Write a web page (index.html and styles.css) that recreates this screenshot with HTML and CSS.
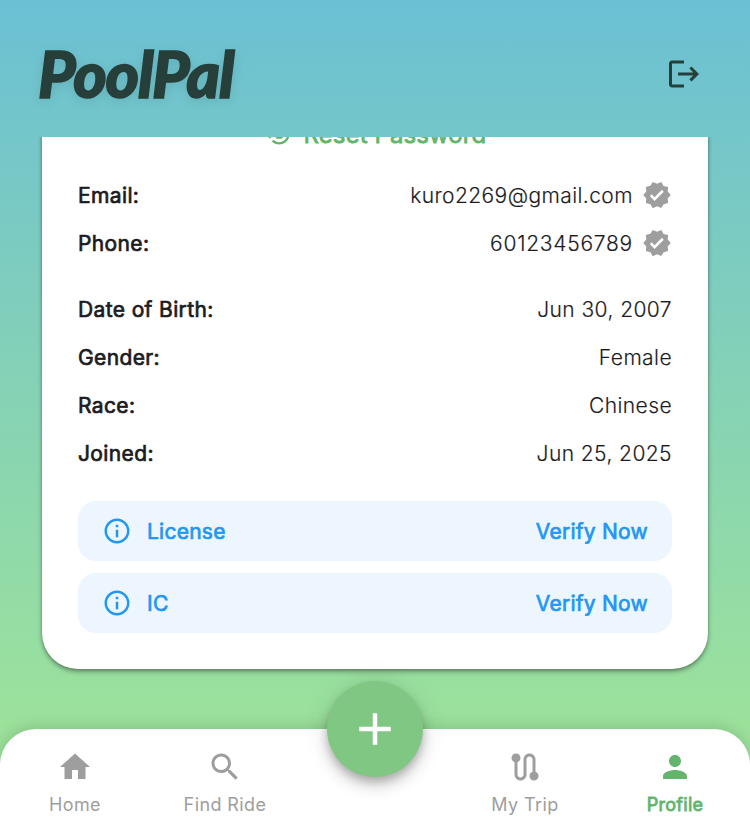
FILE: index.html
```html
<!DOCTYPE html>
<html lang="en">
<head>
<meta charset="utf-8">
<title>PoolPal</title>
<link rel="stylesheet" href="styles.css">
</head>
<body>
<svg class="defs" width="0" height="0">
  <symbol id="verified" viewBox="0 0 24 24"><path d="M23 12l-2.44-2.79.34-3.69-3.61-.82-1.89-3.2L12 2.96 8.6 1.5 6.71 4.69 3.1 5.5l.34 3.7L1 12l2.44 2.79-.34 3.7 3.61.82L8.6 22.5l3.4-1.47 3.4 1.46 1.89-3.19 3.61-.82-.34-3.69L23 12zm-12.91 4.72l-3.8-3.81 1.48-1.48 2.32 2.33 5.85-5.87 1.48 1.48-7.33 7.35z"/></symbol>
  <symbol id="info" viewBox="0 0 24 24"><path d="M11 7h2v2h-2zm0 4h2v6h-2zm1-9C6.48 2 2 6.48 2 12s4.48 10 10 10 10-4.48 10-10S17.520 2 12 2zm0 18c-4.410 0-8-3.590-8-8s3.590-8 8-8 8 3.590 8 8-3.590 8-8 8z"/></symbol>
</svg>
<div class="app">
  <header class="header">
    <div class="logo">PoolPal</div>
    <svg class="icon-36" viewBox="0 0 24 24"><path d="M17 7l-1.410 1.410L18.170 11H8v2h10.170l-2.580 2.580L17 17l5-5zM4 5h8V3H4c-1.100 0-2 .9-2 2v14c0 1.100.9 2 2 2h8v-2H4V5z"/></svg>
  </header>
  <main class="scroll">
    <section class="card">
      <div class="reset">
        <svg class="icon-28" viewBox="0 0 24 24"><path d="M13 3c-4.970 0-9 4.030-9 9H1l4 4 4-4H6c0-3.860 3.140-7 7-7s7 3.140 7 7-3.140 7-7 7c-1.900 0-3.620-.76-4.880-1.990L6.700 18.420C8.320 20.010 10.550 21 13 21c4.970 0 9-4.030 9-9s-4.030-9-9-9zm2 8v-1c0-1.100-.9-2-2-2s-2 .9-2 2v1c-.55 0-1 .45-1 1v3c0 .55.45 1 1 1h4c.55 0 1-.45 1-1v-3c0-.55-.45-1-1-1zm-1 0h-2v-1c0-.55.45-1 1-1s1 .45 1 1v1z"/></svg>
        <span>Reset Password</span>
      </div>
      <div class="rows contact">
        <div class="row"><b>Email:</b><span>kuro2269@gmail.com</span><svg class="icon-30"><use href="#verified"/></svg></div>
        <div class="row"><b>Phone:</b><span class="number">60123456789</span><svg class="icon-30"><use href="#verified"/></svg></div>
      </div>
      <div class="rows">
        <div class="row"><b>Date of Birth:</b><span>Jun 30, 2007</span></div>
        <div class="row"><b>Gender:</b><span>Female</span></div>
        <div class="row"><b>Race:</b><span>Chinese</span></div>
        <div class="row"><b>Joined:</b><span>Jun 25, 2025</span></div>
      </div>
      <div class="tiles">
        <div class="tile"><svg class="icon-30"><use href="#info"/></svg><b>License</b><b class="action">Verify Now</b></div>
        <div class="tile"><svg class="icon-30"><use href="#info"/></svg><b>IC</b><b class="action">Verify Now</b></div>
      </div>
    </section>
  </main>
  <nav class="nav">
    <a class="item"><svg class="icon-36" viewBox="0 0 24 24"><path d="M10 20v-6h4v6h5v-8h3L12 3 2 12h3v8z"/></svg><span>Home</span></a>
    <a class="item"><svg class="icon-36" viewBox="0 0 24 24"><path d="M15.500 14h-.79l-.28-.27C15.410 12.590 16 11.110 16 9.500 16 5.910 13.090 3 9.500 3S3 5.910 3 9.500 5.910 16 9.500 16c1.610 0 3.090-.59 4.230-1.570l.27.28v.79l5 4.990L20.490 19l-4.990-5zm-6 0C7.010 14 5 11.990 5 9.500S7.010 5 9.500 5 14 7.010 14 9.500 11.990 14 9.500 14z"/></svg><span>Find Ride</span></a>
    <a class="item"><svg class="icon-36" viewBox="0 0 24 24"><path d="M19 15.180V7c0-2.210-1.790-4-4-4s-4 1.790-4 4v10c0 1.100-.9 2-2 2s-2-.9-2-2V8.820C8.160 8.400 9 7.300 9 6c0-1.660-1.340-3-3-3S3 4.340 3 6c0 1.300.84 2.400 2 2.820V17c0 2.210 1.790 4 4 4s4-1.790 4-4V7c0-1.100.9-2 2-2s2 .9 2 2v8.180c-1.160.42-2 1.520-2 2.820 0 1.660 1.340 3 3 3s3-1.340 3-3c0-1.300-.84-2.400-2-2.820z"/></svg><span>My Trip</span></a>
    <a class="item active"><svg class="icon-36" viewBox="0 0 24 24"><path d="M12 12c2.210 0 4-1.790 4-4s-1.790-4-4-4-4 1.790-4 4 1.790 4 4 4zm0 2c-2.670 0-8 1.340-8 4v2h16v-2c0-2.660-5.330-4-8-4z"/></svg><span>Profile</span></a>
    <button class="fab" aria-label="Add"><svg viewBox="0 0 24 24"><path d="M19 13h-6v6h-2v-6H5v-2h6V5h2v6h6z"/></svg></button>
  </nav>
</div>
</body>
</html>
```
FILE: styles.css
```css
* { box-sizing: border-box; }
body { margin: 0; font-family: Inter, "Liberation Sans", sans-serif; color: #1c1b1f; }
svg { display: block; flex: none; fill: currentColor; }
.defs { position: absolute; }
.icon-28 { width: 28px; height: 28px; }
.icon-30 { width: 30px; height: 30px; }
.icon-36 { width: 36px; height: 36px; }

.app {
  height: 837px;
  display: flex;
  flex-direction: column;
  overflow: hidden;
  background: linear-gradient(#6bc0d4, #9ce29b 730px);
}

.header {
  height: 137px;
  flex: none;
  display: flex;
  align-items: center;
  justify-content: space-between;
  padding: 11px 48px 0 38px;
  color: #263f3a;
}
.logo {
  font: italic 900 64px/70px Lato, sans-serif;
  letter-spacing: -1.2px;
  -webkit-text-stroke: 1.6px #263f3a;
  text-shadow: 0 3px 12px rgba(0, 0, 0, .12);
}

.scroll {
  height: 592px;
  flex: none;
  display: flex;
  flex-direction: column;
  justify-content: flex-end;
  overflow: hidden;
  padding: 0 42px 60px;
}
.card {
  flex: none;
  padding: 36px;
  border-radius: 36px;
  background: #fff;
  box-shadow: 0 3px 5px rgba(0, 0, 0, .3), 0 1px 3px rgba(0, 0, 0, .2);
}
.reset {
  display: flex;
  align-items: center;
  justify-content: center;
  gap: 12px;
  height: 46px;
  margin-bottom: 14px;
  color: #64b46c;
  font-size: 24px;
  letter-spacing: .1px;
  -webkit-text-stroke: .8px;
}
.reset svg { stroke: none; }
.contact { margin-bottom: 18px; }
.row {
  display: flex;
  align-items: center;
  height: 48px;
  font-size: 21px;
  letter-spacing: .375px;
}
b { font-weight: 400; -webkit-text-stroke: .7px; }
.row span { margin-left: auto; font-weight: 300; letter-spacing: .42px; -webkit-text-stroke: .15px; }
.row .number { letter-spacing: .75px; }
.row svg { margin-left: 9px; color: #9e9e9e; }

.tiles { display: grid; gap: 12px; margin-top: 24px; }
.tile {
  display: flex;
  align-items: center;
  height: 60px;
  padding: 0 24px;
  border-radius: 18px;
  background: #edf6fe;
  color: #2196f3;
  font-size: 21px;
  letter-spacing: .25px;
}
.tile svg { margin-right: 15px; }
.action { margin-left: auto; }

.nav {
  position: relative;
  height: 108px;
  flex: none;
  display: grid;
  grid-template-columns: 150px 150px 1fr 150px 150px;
  border-radius: 36px 36px 0 0;
  background: #fff;
  box-shadow: 0 -3px 15px rgba(0, 0, 0, .14);
}
.item {
  display: flex;
  flex-direction: column;
  align-items: center;
  padding-top: 20px;
  color: #9e9e9e;
  font-size: 18px;
  line-height: 24px;
  letter-spacing: .4px;
}
.item span { margin-top: 8px; }
.item:nth-child(3) { grid-column: 4; }
.active { color: #64b46c; }
.active span { -webkit-text-stroke: .8px; letter-spacing: .3px; }
.fab {
  position: absolute;
  left: 327px;
  top: -48px;
  width: 96px;
  height: 96px;
  display: grid;
  place-items: center;
  padding: 0;
  border: 0;
  border-radius: 50%;
  background: #81c784;
  color: #fff;
  box-shadow: 0 5px 8px -1px rgba(0, 0, 0, .2), 0 9px 15px rgba(0, 0, 0, .14), 0 1px 27px rgba(0, 0, 0, .1);
}
.fab svg { width: 54px; height: 54px; }
```
